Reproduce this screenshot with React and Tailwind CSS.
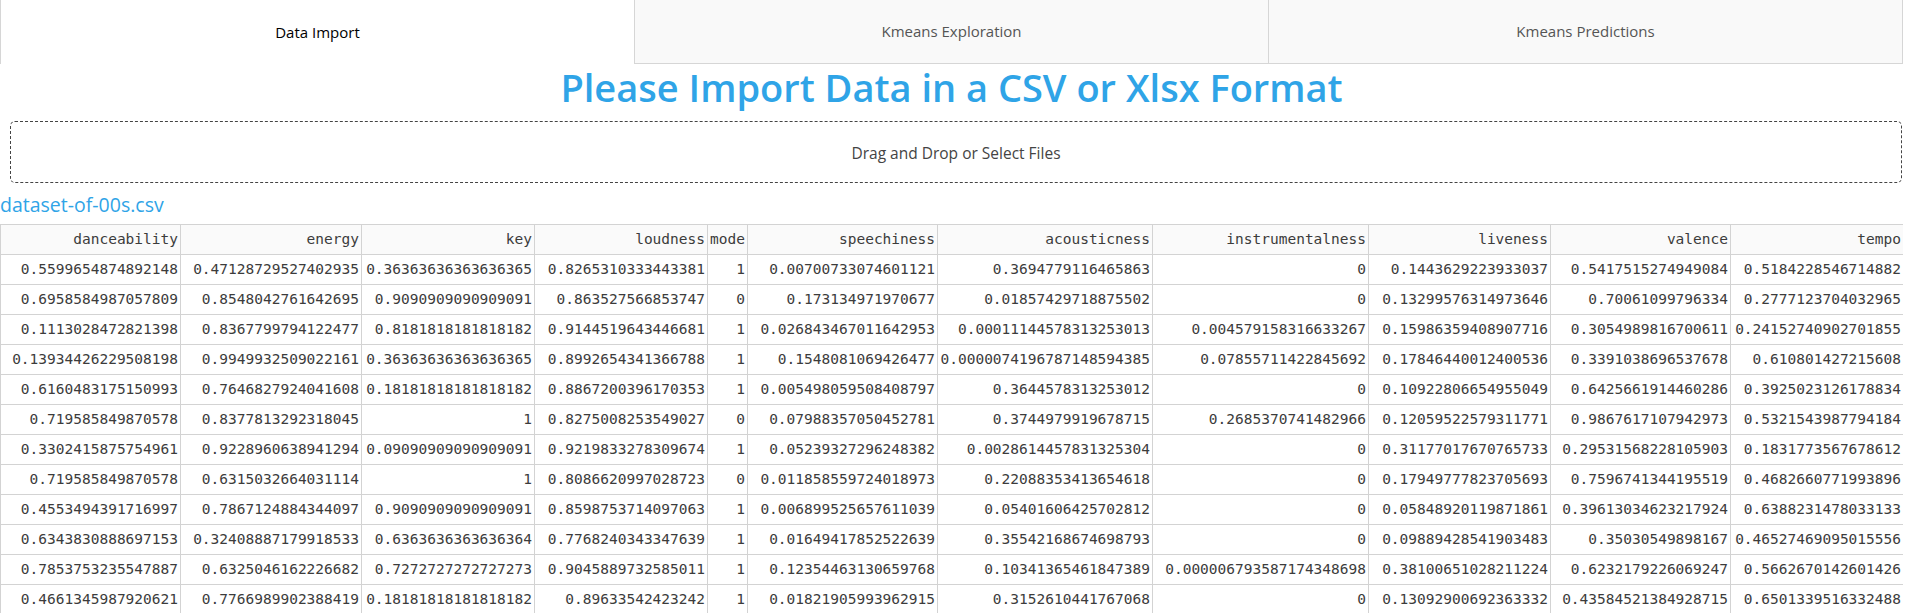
import React from "react";

const cols = [
  { name: "danceability", w: 180 },
  { name: "energy", w: 181 },
  { name: "key", w: 173 },
  { name: "loudness", w: 173 },
  { name: "mode", w: 40 },
  { name: "speechiness", w: 190 },
  { name: "acousticness", w: 215 },
  { name: "instrumentalness", w: 216 },
  { name: "liveness", w: 182 },
  { name: "valence", w: 180 },
  { name: "tempo", w: 173 },
];

const rows = [
  ["0.5599654874892148", "0.47128729527402935", "0.36363636363636365", "0.8265310333443381", "1", "0.00700733074601121", "0.3694779116465863", "0", "0.1443629223933037", "0.5417515274949084", "0.5184228546714882"],
  ["0.6958584987057809", "0.8548042761642695", "0.9090909090909091", "0.863527566853747", "0", "0.173134971970677", "0.01857429718875502", "0", "0.13299576314973646", "0.70061099796334", "0.2777123704032965"],
  ["0.1113028472821398", "0.8367799794122477", "0.8181818181818182", "0.9144519643446681", "1", "0.026843467011642953", "0.00011144578313253013", "0.004579158316633267", "0.15986359408907716", "0.3054989816700611", "0.24152740902701855"],
  ["0.13934426229508198", "0.9949932509022161", "0.36363636363636365", "0.8992654341366788", "1", "0.1548081069426477", "0.0000074196787148594385", "0.07855711422845692", "0.17846440012400536", "0.3391038696537678", "0.610801427215608"],
  ["0.6160483175150993", "0.7646827924041608", "0.18181818181818182", "0.8867200396170353", "1", "0.005498059508408797", "0.3644578313253012", "0", "0.10922806654955049", "0.6425661914460286", "0.3925023126178834"],
  ["0.719585849870578", "0.8377813292318045", "1", "0.8275008253549027", "0", "0.07988357050452781", "0.3744979919678715", "0.2685370741482966", "0.12059522579311771", "0.9867617107942973", "0.5321543987794184"],
  ["0.3302415875754961", "0.9228960638941294", "0.09090909090909091", "0.9219833278309674", "1", "0.05239327296248382", "0.0028614457831325304", "0", "0.31177017670765733", "0.29531568228105903", "0.1831773567678612"],
  ["0.719585849870578", "0.6315032664031114", "1", "0.8086620997028723", "0", "0.011858559724018973", "0.22088353413654618", "0", "0.17949777823705693", "0.7596741344195519", "0.4682660771993896"],
  ["0.4553494391716997", "0.7867124884344097", "0.9090909090909091", "0.8598753714097063", "1", "0.006899525657611039", "0.05401606425702812", "0", "0.05848920119871861", "0.39613034623217924", "0.6388231478033133"],
  ["0.6343830888697153", "0.32408887179918533", "0.6363636363636364", "0.7768240343347639", "1", "0.01649417852522639", "0.35542168674698793", "0", "0.09889428541903483", "0.35030549898167", "0.46527469095015556"],
  ["0.7853753235547887", "0.6325046162226682", "0.7272727272727273", "0.9045889732585011", "1", "0.12354463130659768", "0.10341365461847389", "0.000006793587174348698", "0.38100651028211224", "0.6232179226069247", "0.5662670142601426"],
  ["0.4661345987920621", "0.7766989902388419", "0.18181818181818182", "0.89633542423242", "1", "0.01821905993962915", "0.3152610441767068", "0", "0.13092900692363332", "0.43584521384928715", "0.6501339516332488"],
];

const ui = { fontFamily: '"Open Sans", "Noto Sans", sans-serif' };
const mono = { fontFamily: '"DejaVu Sans Mono", "Liberation Mono", monospace' };

export default function App() {
  return (
    <div className="w-[1903px] h-[613px] overflow-hidden bg-white" style={ui}>
      {/* Tabs */}
      <div className="flex h-[64px]">
        <div className="flex-1 flex items-center justify-center bg-white border-l border-[#d6d6d6] text-[15px] text-[#000]">
          Data Import
        </div>
        <div className="flex-1 flex items-center justify-center bg-[#f9f9f9] border-l border-b border-[#d6d6d6] text-[15px] text-[#555]">
          Kmeans Exploration
        </div>
        <div className="flex-1 flex items-center justify-center bg-[#f9f9f9] border-l border-r border-b border-[#d6d6d6] text-[15px] text-[#555]">
          Kmeans Predictions
        </div>
      </div>

      {/* Title */}
      <h1 className="h-[47px] leading-[47px] text-center text-[38px] font-semibold text-[#2fa4e7]">
        Please Import Data in a CSV or Xlsx Format
      </h1>

      {/* Dropzone */}
      <div className="mt-[10px] ml-[10px] w-[1892px] h-[62px] pt-[3px] border border-dashed border-[#444] rounded-[5px] flex items-center justify-center text-[15.5px] text-[#444]">
        Drag and Drop or Select Files
      </div>

      {/* Filename */}
      <h5 className="mt-[10px] h-[24px] leading-[24px] text-[19.5px] text-[#2fa4e7]">
        dataset-of-00s.csv
      </h5>

      {/* Table */}
      <div className="mt-[7px]">
        <table className="border-collapse table-fixed w-[1903px] text-[14.5px] text-[#3c3c3c]" style={mono}>
          <colgroup>
            {cols.map((c) => (
              <col key={c.name} style={{ width: c.w }} />
            ))}
          </colgroup>
          <thead>
            <tr className="h-[30px] bg-[#fafafa]">
              {cols.map((c) => (
                <th key={c.name} className="border border-[#d3d3d3] text-right font-normal pr-[2px] pl-0 whitespace-nowrap overflow-hidden">
                  {c.name}
                </th>
              ))}
            </tr>
          </thead>
          <tbody>
            {rows.map((r, i) => (
              <tr key={i} className="h-[30px]">
                {r.map((v, j) => (
                  <td key={j} className="border border-[#d3d3d3] text-right pr-[2px] pl-0 whitespace-nowrap overflow-hidden">
                    {v}
                  </td>
                ))}
              </tr>
            ))}
          </tbody>
        </table>
      </div>
    </div>
  );
}
